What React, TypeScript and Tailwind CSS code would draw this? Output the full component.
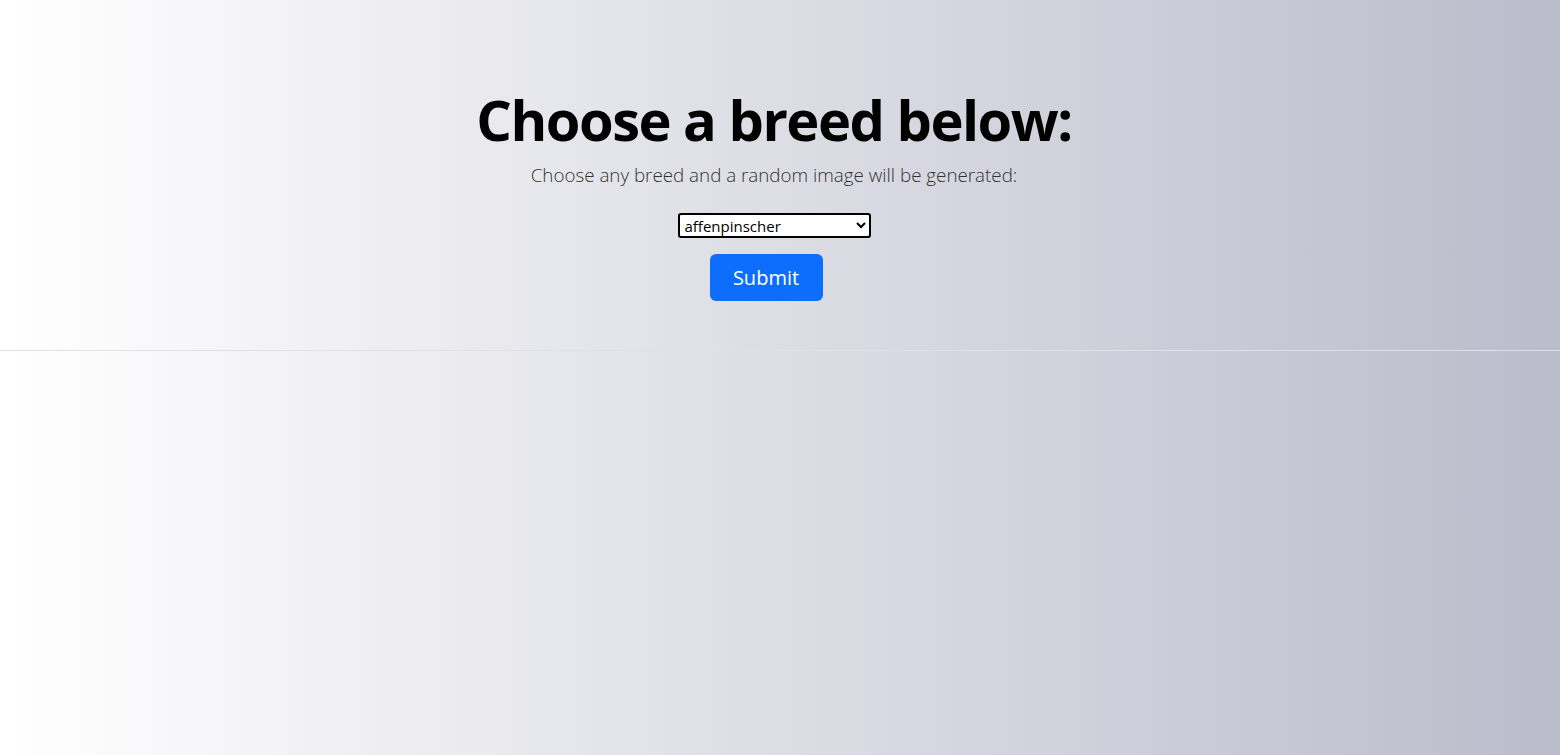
import React from "react";

export default function App() {
  return (
    <div className="min-h-[755px] w-full bg-gradient-to-r from-white to-[#bbbccb] font-['Open_Sans',sans-serif] text-[#212529]">
      <div className="flex flex-col items-center border-b border-[#dee2e6] pt-[86px] pb-[49px] pr-3">
        <h1 className="text-[56px] font-bold leading-[1.2] tracking-[-1.5px] text-black">Choose a breed below:</h1>
        <p className="mt-[8px] text-[18.8px] font-light leading-[1.5] text-[#333]">Choose any breed and a random image will be generated:</p>
        <select className="mt-[24px] h-[25px] w-[193px] rounded-[3px] border-2 border-black bg-white pl-[1px] font-['Open_Sans',sans-serif] text-[15px] text-black">
          <option>affenpinscher</option>
        </select>
        <button className="mt-[16px] mr-4 h-[47px] w-[113px] rounded-[6px] bg-[#0d6efd] text-[20px] text-white">Submit</button>
      </div>
    </div>
  );
}
